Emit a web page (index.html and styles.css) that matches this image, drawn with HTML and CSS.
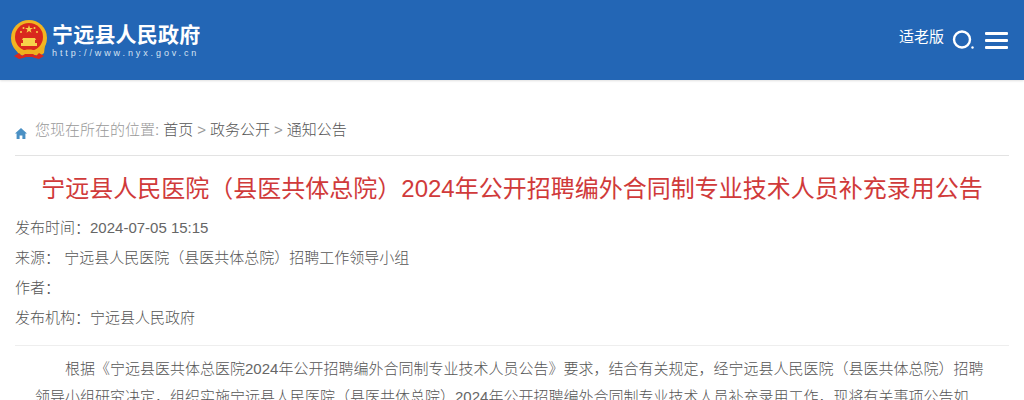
FILE: index.html
```html
<!DOCTYPE html>
<html lang="zh-CN">
<head>
<meta charset="utf-8">
<title>宁远县人民政府</title>
<link rel="stylesheet" href="styles.css">
</head>
<body>
<header class="topbar">
  <div class="brand">
    <svg class="emblem" width="38" height="40" viewBox="0 0 38 40">
      <circle cx="19" cy="18" r="18" fill="#f2b521"/>
      <circle cx="19" cy="17" r="14" fill="#d9281e"/>
      <path d="M19 5l1 3h3l-2.500 1.800 1 3L19 11l-2.500 1.800 1-3L15 8h3z" fill="#f7d34a"/>
      <circle cx="11" cy="12" r="1" fill="#f7d34a"/>
      <circle cx="27" cy="12" r="1" fill="#f7d34a"/>
      <circle cx="13.500" cy="8" r="1" fill="#f7d34a"/>
      <circle cx="24.500" cy="8" r="1" fill="#f7d34a"/>
      <path d="M11 26v-3h2v-3h-1l1-2h12l1 2h-1v3h2v3z" fill="#f7d34a"/>
      <path d="M3 25c4 3 7 3 9 6 3-2 11-2 14 0 2-3 5-3 9-6l-1 8c-3 3-6 3-9 2-2-1-6-1-8 0-3 1-6 1-9-2z" fill="#eeb01f"/>
      <path d="M4 36l5-3 3 3 3-2h8l3 2 3-3 5 3-5 3-4-1-3-1h-6l-3 1-4 1z" fill="#d9281e"/>
    </svg>
    <div class="brand-text">
      <div class="brand-name">宁远县人民政府</div>
      <div class="brand-url">http://www.nyx.gov.cn</div>
    </div>
  </div>
  <div class="tools">
    <span class="elder">适老版</span>
    <svg class="search" width="24" height="24" viewBox="0 0 24 24">
      <circle cx="11" cy="11.500" r="8" fill="none" stroke="#fff" stroke-width="2.400"/>
      <circle cx="21.500" cy="19.500" r="1.200" fill="#fff"/>
    </svg>
    <div class="burger"><i></i><i></i><i></i></div>
  </div>
</header>
<main class="page">
  <nav class="crumbs">
    <svg class="home" width="12" height="11" viewBox="0 0 12 11">
      <path d="M6 0L0 5.500h1.600V11h3V7.500h2.800V11h3V5.500H12z" fill="#4a90c4"/>
    </svg>
    <span class="muted">您现在所在的位置:</span>
    <a>首页</a><span class="muted num">&gt;</span><a>政务公开</a><span class="muted num">&gt;</span><a>通知公告</a>
  </nav>
  <h1 class="title">宁远县人民医院（县医共体总院）2024年公开招聘编外合同制专业技术人员补充录用公告</h1>
  <div class="meta">
    <p>发布时间：<span class="num">2024-07-05 15:15</span></p>
    <p>来源： 宁远县人民医院（县医共体总院）招聘工作领导小组</p>
    <p>作者：</p>
    <p>发布机构：宁远县人民政府</p>
  </div>
  <article class="body">
    <p>根据《宁远县医共体总医院<span class="num">2024</span>年公开招聘编外合同制专业技术人员公告》要求，结合有关规定，经宁远县人民医院（县医共体总院）招聘领导小组研究决定，组织实施宁远县人民医院（县医共体总院）<span class="num">2024</span>年公开招聘编外合同制专业技术人员补充录用工作，现将有关事项公告如下。</p>
  </article>
</main>
</body>
</html>
```
FILE: styles.css
```css
* { box-sizing: border-box; }
html, body { margin: 0; padding: 0; height: 400px; overflow: hidden; background: #fff; }
body { font-family: "Liberation Sans", "Noto Sans CJK SC", sans-serif; font-weight: 300; color: #555; }
.num { font-weight: 400; color: #666; }
.topbar { height: 80px; background: #2366b5; display: flex; justify-content: space-between; padding: 20px 16px 0 10px; box-shadow: 0 1px 2px rgba(0,0,0,.12); }
.brand { display: flex; gap: 4px; height: 40px; }
.brand-text { padding-top: 3px; }
.brand-name { color: #fff; font-size: 21px; line-height: 24px; font-weight: bold; letter-spacing: .2px; }
.brand-url { color: #d5e3f3; font-size: 9px; line-height: 11px; letter-spacing: 2.900px; margin-top: 1px; font-weight: 400; }
.tools { display: flex; gap: 7px; height: 30px; align-items: flex-start; }
.elder { color: #fff; font-size: 15px; line-height: 33px; font-weight: 400; }
.search { margin-top: 8px; }
.burger { width: 23px; margin-top: 12px; display: flex; flex-direction: column; gap: 4px; margin-left: 3px; }
.burger i { display: block; height: 3px; background: #fff; border-radius: 1px; }
.page { padding: 0 15px; }
.crumbs { margin-top: 39px; height: 37px; border-bottom: 1px solid #e3e3e3; font-size: 15px; line-height: 21px; display: flex; align-items: flex-start; gap: 4px; }
.home { margin-top: 9px; margin-right: 4px; }
.muted { color: #999; }
.crumbs a { color: #555; }
.title { margin: 16px 0 0; color: #d03a3a; font-size: 24px; line-height: 34px; font-weight: normal; text-align: center; white-space: nowrap; }
.meta { margin-top: 7px; border-bottom: 1px solid #eee; padding-bottom: 12px; }
.meta p { margin: 0; font-size: 15px; line-height: 30px; }
.body { padding: 9px 20px 0; }
.body p { margin: 0; font-size: 15px; line-height: 28px; text-indent: 30px; }
```
